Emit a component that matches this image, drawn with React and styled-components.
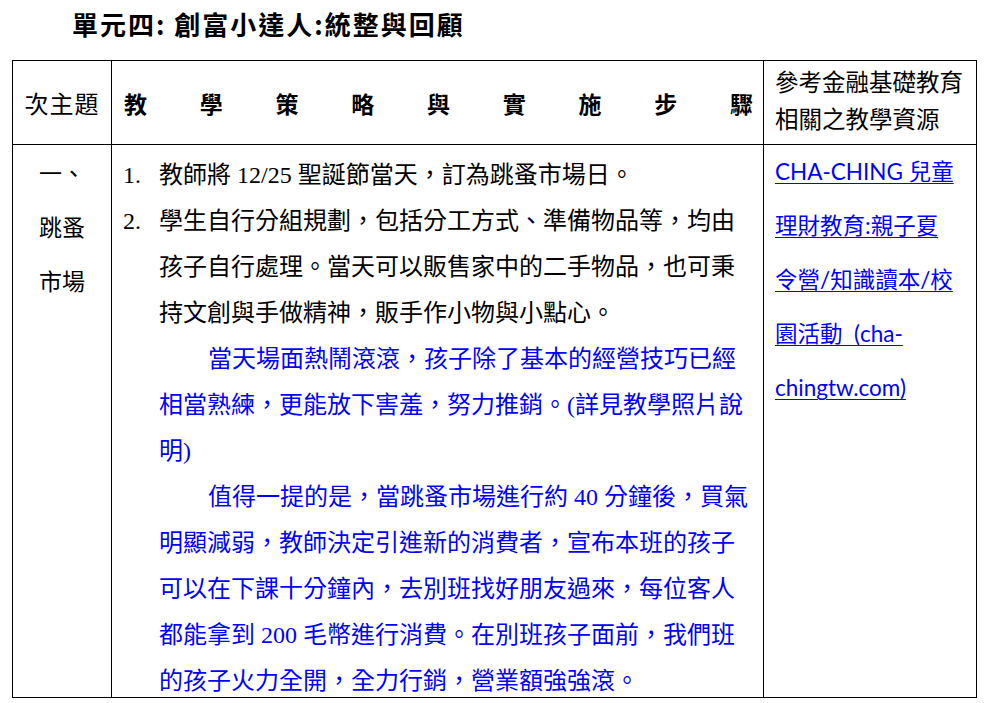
import React from 'react';
import styled, { createGlobalStyle } from 'styled-components';

const GlobalStyle = createGlobalStyle`
    html, body {
        margin: 0;
        padding: 0;
        background: #fff;
    }
    body {
        font-family: "Liberation Serif", "Noto Sans CJK TC", serif;
        color: #000;
    }
`;

const Page = styled.div`
    width: 987px;
    height: 703px;
    overflow: hidden;
`;

const Title = styled.h1`
    margin: 0 0 12px;
    padding-left: 72px;
    height: 48px;
    line-height: 48px;
    font-family: "Noto Sans CJK TC", sans-serif;
    font-size: 26px;
    font-weight: 700;
    letter-spacing: 2px;
`;

const Grid = styled.div`
    margin-left: 12px;
    display: grid;
    grid-template-columns: 99px 652px 213px;
    grid-template-rows: 84px 553px;
    border-left: 1px solid #000;
    border-top: 1px solid #000;
    width: 964px;
`;

const Cell = styled.div`
    box-sizing: border-box;
    border-right: 1px solid #000;
    border-bottom: 1px solid #000;
    min-width: 0;
`;

const TopicHead = styled(Cell)`
    display: flex;
    align-items: center;
    justify-content: center;
    font-family: "Noto Sans CJK TC", sans-serif;
    font-size: 24px;
    letter-spacing: 1px;
`;

const StepsHead = styled(Cell)`
    display: flex;
    align-items: center;
    justify-content: space-between;
    padding: 0 10px 0 12px;
    font-family: "Noto Sans CJK TC", sans-serif;
    font-size: 23px;
    font-weight: 700;
`;

const ResourceHead = styled(Cell)`
    padding: 2px 0 0 11px;
    font-family: "Noto Sans CJK TC", sans-serif;
    font-size: 23.5px;
    line-height: 37px;
`;

const TopicCell = styled(Cell)`
    text-align: center;
    font-family: "Noto Sans CJK TC", sans-serif;
    font-size: 23px;
    line-height: 54px;
`;

const StepsCell = styled(Cell)`
    padding: 7px 0 0 11px;
    font-size: 24px;
    line-height: 46px;
`;

const Item = styled.div`
    display: flex;
`;

const Num = styled.span`
    flex: 0 0 36px;
`;

const Lines = styled.div`
    color: #000;
`;

const Line = styled.div`
    white-space: nowrap;
    padding-left: ${props => (props.indent ? '49px' : '0')};
`;

const Para = styled.div`
    padding-left: 36px;
    color: #0000ff;
`;

const ResourceCell = styled(Cell)`
    padding-left: 11px;
    font-family: "Lato", "Noto Sans CJK TC", sans-serif;
    font-size: 22.5px;
    line-height: 54px;
`;

const Link = styled.a`
    color: #0000ff;
    text-decoration: underline;
    text-decoration-thickness: 1px;
    text-underline-offset: 3px;
    white-space: pre;
`;

const heads = ['教', '學', '策', '略', '與', '實', '施', '步', '驟'];

const linkLines = ['CHA-CHING 兒童', '理財教育:親子夏', '令營/知識讀本/校', '園活動  (cha-', 'chingtw.com)'];

export default function App() {
    return (
        <Page>
            <GlobalStyle />
            <Title>單元四: 創富小達人:統整與回顧</Title>
            <Grid>
                <TopicHead>次主題</TopicHead>
                <StepsHead>
                    {heads.map(h => (
                        <span key={h}>{h}</span>
                    ))}
                </StepsHead>
                <ResourceHead>
                    參考金融基礎教育
                    <br />
                    相關之教學資源
                </ResourceHead>

                <TopicCell>
                    一、
                    <br />
                    跳蚤
                    <br />
                    市場
                </TopicCell>
                <StepsCell>
                    <Item>
                        <Num>1.</Num>
                        <Lines>
                            <Line>教師將 12/25 聖誕節當天，訂為跳蚤市場日。</Line>
                        </Lines>
                    </Item>
                    <Item>
                        <Num>2.</Num>
                        <Lines>
                            <Line>學生自行分組規劃，包括分工方式、準備物品等，均由</Line>
                            <Line>孩子自行處理。當天可以販售家中的二手物品，也可秉</Line>
                            <Line>持文創與手做精神，販手作小物與小點心。</Line>
                        </Lines>
                    </Item>
                    <Para>
                        <Line indent>當天場面熱鬧滾滾，孩子除了基本的經營技巧已經</Line>
                        <Line>相當熟練，更能放下害羞，努力推銷。(詳見教學照片說</Line>
                        <Line>明)</Line>
                        <Line indent>值得一提的是，當跳蚤市場進行約 40 分鐘後，買氣</Line>
                        <Line>明顯減弱，教師決定引進新的消費者，宣布本班的孩子</Line>
                        <Line>可以在下課十分鐘內，去別班找好朋友過來，每位客人</Line>
                        <Line>都能拿到 200 毛幣進行消費。在別班孩子面前，我們班</Line>
                        <Line>的孩子火力全開，全力行銷，營業額強強滾。</Line>
                    </Para>
                </StepsCell>
                <ResourceCell>
                    {linkLines.map(l => (
                        <div key={l}>
                            <Link href="#">{l}</Link>
                        </div>
                    ))}
                </ResourceCell>
            </Grid>
        </Page>
    );
}
